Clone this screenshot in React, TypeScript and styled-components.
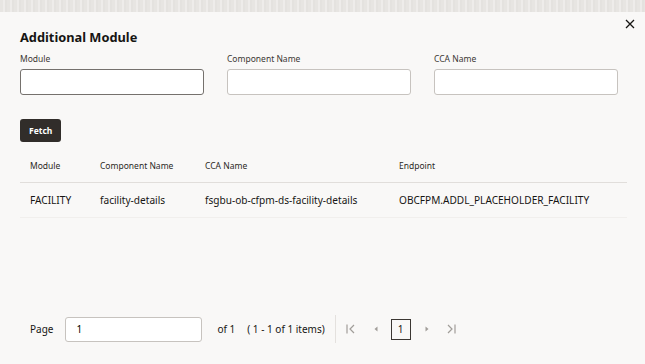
import React from "react";
import styled, { createGlobalStyle } from "styled-components";

const GlobalStyle = createGlobalStyle`
  html, body {
    margin: 0;
    padding: 0;
    background: #f9f8f7;
  }
  body {
    font-family: "Noto Sans", "Liberation Sans", sans-serif;
    color: #161513;
  }
`;

const Page = styled.div`
  width: 645px;
  height: 364px;
  display: flex;
  flex-direction: column;
  overflow: hidden;
`;

const Backdrop = styled.div`
  height: 12px;
  flex-shrink: 0;
  background: repeating-linear-gradient(90deg, #e7e5e2 0 3px, #eeecea 3px 5px, #e4e2df 5px 7px);
`;

const Dialog = styled.div`
  flex: 1;
  display: flex;
  flex-direction: column;
  background: #f9f8f7;
  padding: 17px 18px 0 20px;
  position: relative;
`;

const CloseButton = styled.button`
  position: absolute;
  top: 5px;
  right: 8px;
  width: 14px;
  height: 14px;
  padding: 0;
  border: none;
  background: transparent;
  display: flex;
  align-items: center;
  justify-content: center;
  cursor: pointer;
`;

const Title = styled.h2`
  margin: 0;
  font-size: 12.8px;
  font-weight: 700;
  line-height: 16px;
  color: #161513;
`;

const FieldRow = styled.div`
  display: grid;
  grid-template-columns: repeat(3, 184px);
  column-gap: 23px;
  margin-top: 8px;
`;

const Field = styled.div`
  display: flex;
  flex-direction: column;
`;

const Label = styled.label`
  font-size: 8.5px;
  line-height: 12px;
  color: #3b3733;
  margin-bottom: 4px;
`;

const TextInput = styled.input<{ $focused?: boolean }>`
  box-sizing: border-box;
  height: 26px;
  width: 100%;
  border: 1px solid ${(p) => (p.$focused ? "#75716d" : "#c7c3bf")};
  border-radius: 3px;
  background: #fff;
  font-family: inherit;
  font-size: 10px;
  padding: 0 8px;
  outline: none;
`;

const FetchButton = styled.button`
  align-self: flex-start;
  margin-top: 24px;
  height: 23px;
  padding: 0 9px;
  border: none;
  border-radius: 3px;
  background: #312d2a;
  color: #fff;
  font-family: inherit;
  font-size: 8.5px;
  font-weight: 700;
  cursor: pointer;
`;

const Table = styled.div`
  margin-top: 6px;
  display: flex;
  flex-direction: column;
`;

const Row = styled.div<{ $head?: boolean }>`
  display: grid;
  grid-template-columns: 70px 105px 194px 1fr;
  align-items: center;
  height: 34px;
  padding-left: 10px;
  border-bottom: 1px solid ${(p) => (p.$head ? "#e1dedb" : "#f1efed")};
  font-size: ${(p) => (p.$head ? "8.5px" : "10.1px")};
  color: ${(p) => (p.$head ? "#2b2825" : "#161513")};
`;

const Cell = styled.div`
  white-space: nowrap;
`;

const Footer = styled.div`
  margin-top: auto;
  margin-bottom: 21px;
  display: flex;
  align-items: center;
  padding-left: 10px;
  font-size: 10px;
  color: #161513;
`;

const PageInput = styled(TextInput)`
  width: 137px;
  height: 25px;
  margin-left: 12px;
  border-color: #c7c3bf;
  padding: 0 10px;
`;

const Muted = styled.span<{ $gap: number }>`
  margin-left: ${(p) => p.$gap}px;
`;

const Divider = styled.span`
  width: 1px;
  height: 28px;
  background: #e4e1de;
  margin: 0 9px 0 10px;
`;

const NavButton = styled.span<{ $gap?: number }>`
  display: flex;
  align-items: center;
  justify-content: center;
  width: 12px;
  height: 12px;
  margin-left: ${(p) => p.$gap ?? 0}px;
  color: #a19d99;
`;

const PageBox = styled.span`
  box-sizing: border-box;
  width: 20px;
  height: 21px;
  margin-left: 9px;
  border: 1px solid #3b3733;
  display: flex;
  align-items: center;
  justify-content: center;
  font-size: 10px;
  color: #161513;
`;

const rows = [
  {
    module: "FACILITY",
    component: "facility-details",
    cca: "fsgbu-ob-cfpm-ds-facility-details",
    endpoint: "OBCFPM.ADDL_PLACEHOLDER_FACILITY",
  },
];

export default function App() {
  return (
    <Page>
      <GlobalStyle />
      <Backdrop />
      <Dialog>
        <CloseButton aria-label="Close">
          <svg width="10" height="10" viewBox="0 0 10 10">
            <path d="M1 1 L9 9 M9 1 L1 9" stroke="#161513" strokeWidth="1.3" />
          </svg>
        </CloseButton>
        <Title>Additional Module</Title>
        <FieldRow>
          <Field>
            <Label>Module</Label>
            <TextInput $focused />
          </Field>
          <Field>
            <Label>Component Name</Label>
            <TextInput />
          </Field>
          <Field>
            <Label>CCA Name</Label>
            <TextInput />
          </Field>
        </FieldRow>
        <FetchButton>Fetch</FetchButton>
        <Table>
          <Row $head>
            <Cell>Module</Cell>
            <Cell>Component Name</Cell>
            <Cell>CCA Name</Cell>
            <Cell>Endpoint</Cell>
          </Row>
          {rows.map((r) => (
            <Row key={r.cca}>
              <Cell>{r.module}</Cell>
              <Cell>{r.component}</Cell>
              <Cell>{r.cca}</Cell>
              <Cell>{r.endpoint}</Cell>
            </Row>
          ))}
        </Table>
        <Footer>
          <span>Page</span>
          <PageInput defaultValue="1" />
          <Muted $gap={15}>of 1</Muted>
          <Muted $gap={12}>( 1 - 1 of 1 items)</Muted>
          <Divider />
          <NavButton>
            <svg width="12" height="12" viewBox="0 0 12 12">
              <path d="M2 1.5 V10.5 M9 2 L5 6 L9 10" stroke="currentColor" strokeWidth="1.2" fill="none" />
            </svg>
          </NavButton>
          <NavButton $gap={13}>
            <svg width="8" height="8" viewBox="0 0 8 8">
              <path d="M5.5 1.5 L2.5 4 L5.5 6.5 Z" fill="currentColor" />
            </svg>
          </NavButton>
          <PageBox>1</PageBox>
          <NavButton $gap={10}>
            <svg width="8" height="8" viewBox="0 0 8 8">
              <path d="M2.5 1.5 L5.5 4 L2.5 6.5 Z" fill="currentColor" />
            </svg>
          </NavButton>
          <NavButton $gap={12}>
            <svg width="12" height="12" viewBox="0 0 12 12">
              <path d="M10 1.5 V10.5 M3 2 L7 6 L3 10" stroke="currentColor" strokeWidth="1.2" fill="none" />
            </svg>
          </NavButton>
        </Footer>
      </Dialog>
    </Page>
  );
}
